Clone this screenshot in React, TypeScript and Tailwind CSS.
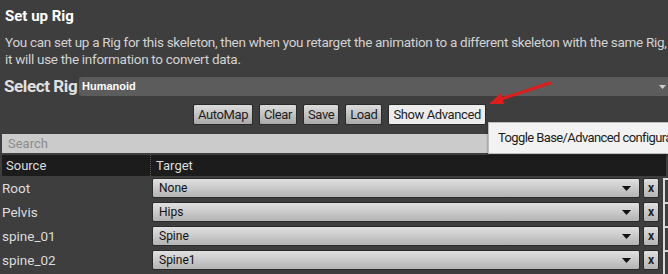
import React from 'react';

const rows = [
  { source: 'Root', target: 'None' },
  { source: 'Pelvis', target: 'Hips' },
  { source: 'spine_01', target: 'Spine' },
  { source: 'spine_02', target: 'Spine1' },
];

const btn =
  'h-[21px] shrink-0 whitespace-nowrap px-[4px] rounded-[2px] border border-[#2a2a2a] bg-gradient-to-b from-[#dcdcdc] to-[#a9a9a9] text-[13px] leading-[19px] tracking-[-0.4px] text-[#1e1e1e]';

function Caret() {
  return (
    <svg width="9" height="5" viewBox="0 0 9 5">
      <path d="M0 0h9L4.5 5z" fill="#111" />
    </svg>
  );
}

export default function App() {
  return (
    <div
      className="relative w-[668px] h-[274px] overflow-hidden bg-[#3e3e3e] text-[#d6d6d6]"
      style={{ fontFamily: 'Roboto, "Liberation Sans", sans-serif' }}
    >
      <div className="px-[5px] pt-[6px] text-[15px] font-bold leading-[20px] text-white">Set up Rig</div>
      <div className="mt-[8px] whitespace-nowrap px-[5px] text-[13.5px] leading-[17px] tracking-[-0.3px] text-[#d2d2d2]">
        You can set up a Rig for this skeleton, then when you retarget the animation to a different skeleton with the same Rig,
        <br />
        it will use the information to convert data.
      </div>

      <div className="mt-[9px] flex h-[19px] items-center">
        <div className="w-[79px] shrink-0 whitespace-nowrap pl-[4px] text-[17px] font-bold leading-[19px] tracking-[-0.4px] text-[#e0e0e0]">
          Select Rig
        </div>
        <div className="flex h-[19px] flex-1 items-center justify-between rounded-l-[3px] bg-[#5c5c5c] pl-[3px] pr-[2px]">
          <span className="text-[11px] font-bold text-white" style={{ fontFamily: '"Liberation Sans", sans-serif' }}>
            Humanoid
          </span>
          <svg width="7" height="4" viewBox="0 0 7 4">
            <path d="M0 0h7L3.5 4z" fill="#cfcfcf" />
          </svg>
        </div>
      </div>

      <div className="mt-[8px] flex h-[21px] gap-[6px] pl-[193px]">
        <button className={btn}>AutoMap</button>
        <button className={btn}>Clear</button>
        <button className={btn}>Save</button>
        <button className={btn}>Load</button>
        <button className="h-[21px] shrink-0 whitespace-nowrap rounded-[2px] border border-[#2a2a2a] bg-[#ececec] px-[4px] text-[13px] leading-[19px] tracking-[-0.4px] text-[#1e1e1e]">
          Show Advanced
        </button>
      </div>

      <div className="mt-[9px] mx-[2px] h-[19px] bg-[#cbcbcb] px-[6px] text-[13px] leading-[19px] text-[#8c8c8c]">Search</div>

      <div className="mt-[2px] mx-[2px] flex h-[21px] items-center bg-[#1c1c1c] text-[13px] text-[#dcdcdc]">
        <div className="w-[149px] border-r border-dotted border-[#555] pl-[4px] leading-[21px]">Source</div>
        <div className="pl-[5px] leading-[21px]">Target</div>
      </div>

      <div className="mt-[2px] flex flex-col gap-[4px]">
        {rows.map((r) => (
          <div key={r.source} className="flex h-[20px] items-center">
            <div className="w-[152px] pl-[2px] text-[13.5px] text-[#dcdcdc]">{r.source}</div>
            <div className="flex h-[20px] w-[488px] items-center justify-between rounded-[2px] border border-[#2b2b2b] bg-gradient-to-b from-[#e0e0e0] to-[#b4b4b4] pl-[6px] pr-[8px]">
              <span className="text-[12px] text-[#111]">{r.target}</span>
              <Caret />
            </div>
            <div className="ml-[3px] flex h-[20px] w-[16px] items-center justify-center rounded-[2px] border border-[#2b2b2b] bg-gradient-to-b from-[#e0e0e0] to-[#b4b4b4] text-[12px] font-bold text-[#222]">
              x
            </div>
            <div className="ml-[4px] h-[24px] flex-1 self-start border-l-2 border-t-2 border-[#d8d8d8]" />
          </div>
        ))}
      </div>

      <div className="absolute left-[488px] top-[122px] h-[32px] w-[190px] whitespace-nowrap border border-[#bdbdbd] bg-[#f2f2f2] pl-[9px] text-[13px] leading-[30px] tracking-[-0.6px] text-[#1c1c1c] shadow-[0_1px_2px_rgba(0,0,0,0.5)]">
        Toggle Base/Advanced configuration
      </div>

      <svg className="absolute left-[486px] top-[80px]" width="66" height="28" viewBox="0 0 66 28">
        <path d="M64 3L12 20" stroke="#e01b1b" strokeWidth="3" strokeLinecap="round" />
        <path d="M3 24L15 13L18 24z" fill="#e01b1b" />
      </svg>
    </div>
  );
}
